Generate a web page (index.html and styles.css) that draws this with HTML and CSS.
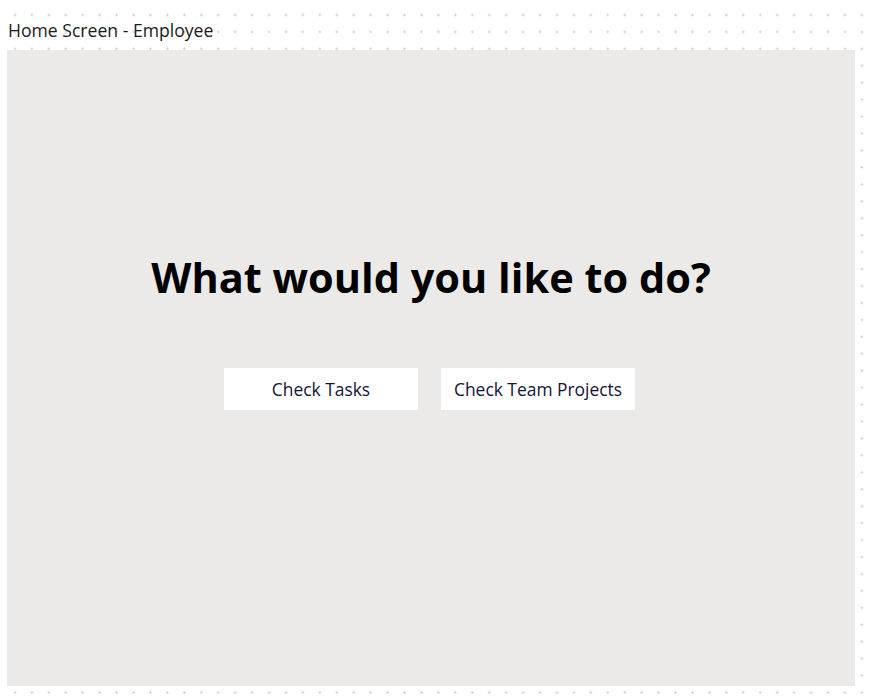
FILE: index.html
```html
<!DOCTYPE html>
<html>
<head>
<meta charset="utf-8">
<link rel="stylesheet" href="styles.css">
</head>
<body>
<div class="page">
  <div class="frame-label">Home Screen - Employee</div>
  <div class="frame">
    <h1 class="question">What would you like to do?</h1>
    <div class="actions">
      <button class="action">Check Tasks</button>
      <button class="action">Check Team Projects</button>
    </div>
  </div>
</div>
</body>
</html>
```
FILE: styles.css
```css
html, body {
  margin: 0;
  padding: 0;
}
body {
  width: 871px;
  height: 700px;
  overflow: hidden;
  background-color: #ffffff;
  background-image: radial-gradient(circle, #cfd3dc 1.1px, transparent 1.4px);
  background-size: 16.95px 16.95px;
  background-position: 6.5px 6.5px;
  font-family: "Open Sans", "Liberation Sans", sans-serif;
}
.page {
  padding: 19px 0 0 7px;
}
.frame-label {
  font-size: 17.6px;
  color: #1b1b1b;
  line-height: 22px;
  padding-left: 1px;
  height: 31px;
}
.frame {
  width: 848px;
  height: 636px;
  background: #ebeae8;
  display: flex;
  flex-direction: column;
  align-items: center;
  box-sizing: border-box;
  padding-top: 198px;
}
.question {
  margin: 0;
  font-size: 41.5px;
  font-weight: 700;
  color: #000;
  line-height: 58px;
  letter-spacing: 0;
}
.actions {
  display: flex;
  gap: 23px;
  margin-top: 62px;
  margin-left: -3px;
}
.action {
  width: 194px;
  height: 42px;
  background: #ffffff;
  border: none;
  font-family: "Open Sans", "Liberation Sans", sans-serif;
  font-size: 17.4px;
  color: #13133a;
  padding: 0;
}
```
